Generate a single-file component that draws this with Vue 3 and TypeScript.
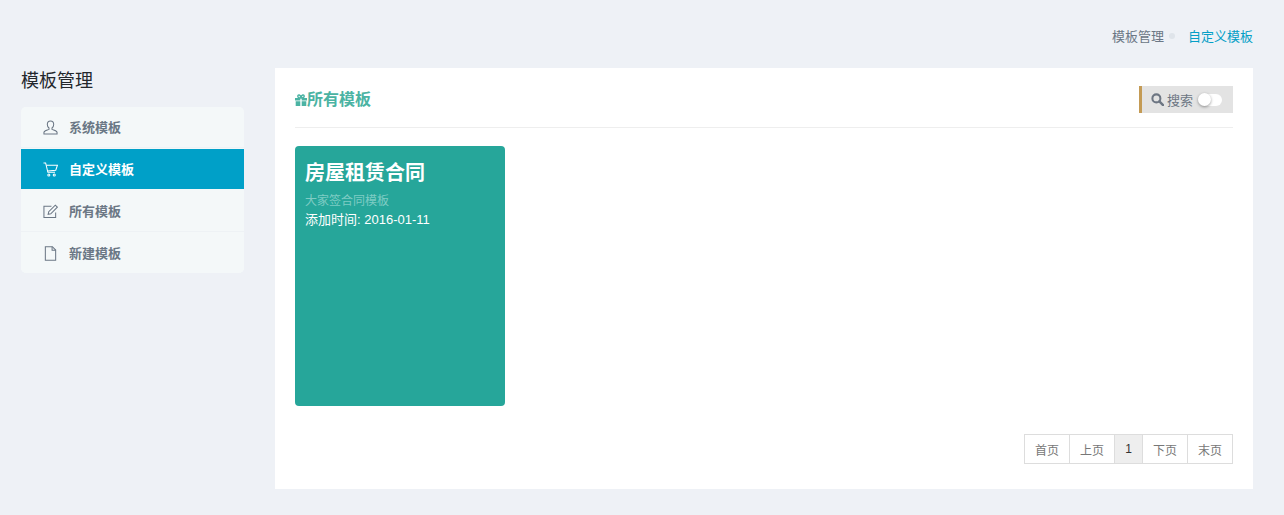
<script setup lang="ts">
const items = [
  { label: '系统模板', icon: 'user', active: false },
  { label: '自定义模板', icon: 'cart', active: true },
  { label: '所有模板', icon: 'edit', active: false },
  { label: '新建模板', icon: 'file', active: false },
]
const pages = [
  { label: '首页', current: false },
  { label: '上页', current: false },
  { label: '1', current: true },
  { label: '下页', current: false },
  { label: '末页', current: false },
]
</script>

<template>
  <div class="page">
    <div class="crumbs">
      <span class="crumb">模板管理</span>
      <i class="dot"></i>
      <span class="crumb current">自定义模板</span>
    </div>
    <div class="main">
      <aside class="side">
        <h2 class="side-title">模板管理</h2>
        <ul class="menu">
          <li v-for="item in items" :key="item.label" class="menu-item" :class="{ active: item.active }">
            <svg class="menu-icon" viewBox="0 0 16 16" fill="none" stroke="currentColor" stroke-width="1.1">
              <template v-if="item.icon === 'user'">
                <path d="M8 1c-2.100 0-3.400 1.500-3.400 3.700 0 1.500.7 3 1.800 3.800v1.500c-1.500.8-5.200 1.100-5.400 3.200V15h14v-1.800c-.2-2.100-3.900-2.400-5.400-3.200V8.500c1.100-.8 1.800-2.300 1.800-3.800C11.400 2.500 10.100 1 8 1z" />
              </template>
              <template v-else-if="item.icon === 'cart'">
                <path d="M.5 1h2.300l2.400 10h7.600" />
                <path d="M3.400 3.500h12l-1.800 5.200L4.600 9.500" />
                <circle cx="6.200" cy="13.800" r="1.100" />
                <circle cx="12" cy="13.800" r="1.100" />
              </template>
              <template v-else-if="item.icon === 'edit'">
                <path d="M13.500 9v5.500H1V2.500h8" />
                <path d="M5.500 11l.6-2.800 7-7 2.200 2.200-7 7z" />
              </template>
              <template v-else>
                <path d="M2.500 .8h7.500l3.500 3.500v10.900h-11z" />
                <path d="M9.700 .8v3.800h3.800" />
              </template>
            </svg>
            <span>{{ item.label }}</span>
          </li>
        </ul>
      </aside>
      <section class="panel">
        <header class="panel-head">
          <h3 class="panel-title">
            <svg class="gift" viewBox="0 0 12 12" fill="currentColor">
              <path d="M0 4h5.300v2.600H0zM6.700 4H12v2.600H6.700zM.7 7.200h4.600V12H.7zM6.700 7.200h4.600V12H6.700z" />
              <path d="M5.800 4C4.500 4 2.800 3.600 2.800 2.300 2.800 1.200 3.700 .8 4.300 1c.9.300 1.500 1.500 1.700 2.500.2-1 .8-2.200 1.700-2.500.6-.2 1.500.2 1.500 1.300C9.200 3.600 7.500 4 6.200 4z" fill="none" stroke="currentColor" stroke-width="1.400" />
            </svg>所有模板
          </h3>
          <div class="search">
            <svg class="search-icon" viewBox="0 0 14 14" fill="none" stroke="currentColor">
              <circle cx="5.800" cy="5.800" r="4.300" stroke-width="2.200" />
              <path d="M9 9l4 4" stroke-width="2.600" stroke-linecap="round" />
            </svg>
            <span>搜索</span>
            <span class="toggle"><i class="knob"></i></span>
          </div>
        </header>
        <div class="cards">
          <article class="card">
            <h4 class="card-title">房屋租赁合同</h4>
            <p class="card-sub">大家签合同模板</p>
            <p class="card-date">添加时间: 2016-01-11</p>
          </article>
        </div>
        <nav class="pager">
          <a v-for="p in pages" :key="p.label" class="page-btn" :class="{ current: p.current }">{{ p.label }}</a>
        </nav>
      </section>
    </div>
  </div>
</template>

<style>
html, body { margin: 0; background: #eef1f6; }
</style>

<style scoped>
.page {
  box-sizing: border-box;
  height: 515px;
  overflow: hidden;
  padding: 0 31px 0 21px;
  background: #eef1f6;
  font-family: "Liberation Sans", "Noto Sans CJK SC", sans-serif;
  font-size: 13px;
}
.crumbs {
  height: 68px;
  box-sizing: border-box;
  padding-top: 28px;
  display: flex;
  justify-content: flex-end;
  align-items: flex-start;
  line-height: 18px;
  color: #6b7785;
}
.dot {
  width: 6px;
  height: 6px;
  margin: 5px 13px 0 5px;
  border-radius: 50%;
  background: #dfe4ea;
}
.crumb.current { color: #049fc6; }
.main { display: flex; align-items: flex-start; }
.side { width: 223px; margin-right: 31px; }
.side-title {
  margin: 0;
  height: 39px;
  padding-top: 1px;
  box-sizing: border-box;
  font-size: 18px;
  font-weight: 400;
  line-height: 24px;
  color: #23272c;
}
.menu {
  list-style: none;
  margin: 0;
  padding: 0;
  background: #f4f8f9;
  border-radius: 5px;
  overflow: hidden;
}
.menu-item {
  height: 40px;
  margin-bottom: 2px;
  padding-left: 21px;
  padding-bottom: 2px;
  box-sizing: border-box;
  display: flex;
  align-items: center;
  background: #f4f8f9;
  color: #6b7785;
  font-weight: 700;
  box-shadow: 0 1px 0 #eef2f5;
}
.menu-item:last-child { margin-bottom: 0; box-shadow: none; }
.menu-item.active { background: #00a0c8; color: #fff; box-shadow: none; }
.menu-icon { width: 15px; height: 15px; margin: 2px 11px 0 1px; flex: none; }
.panel {
  flex: 1;
  height: 421px;
  box-sizing: border-box;
  padding: 18px 20px 0;
  background: #fff;
}
.panel-head {
  height: 42px;
  box-sizing: border-box;
  display: flex;
  justify-content: space-between;
  align-items: flex-start;
  border-bottom: 1px solid #eeeeee;
}
.panel-title {
  margin: 0;
  display: flex;
  align-items: center;
  height: 27px;
  font-size: 16px;
  font-weight: 700;
  line-height: 24px;
  color: #4bb3a3;
}
.gift { width: 12px; height: 12px; }
.search {
  width: 94px;
  height: 27px;
  box-sizing: border-box;
  padding-left: 9px;
  display: flex;
  align-items: center;
  border-left: 3px solid #c49b55;
  background: #e3e3e3;
  color: #6d7683;
}
.search-icon { width: 13px; height: 13px; margin-right: 3px; }
.toggle {
  position: relative;
  width: 24px;
  height: 12px;
  margin-left: 5px;
  border-radius: 6px;
  background: #fff;
}
.knob {
  position: absolute;
  left: 0;
  top: -1px;
  width: 13px;
  height: 13px;
  border-radius: 50%;
  background: #fff;
  box-shadow: 0 1px 3px rgba(0, 0, 0, 0.4);
}
.cards { padding-top: 18px; }
.card {
  width: 210px;
  height: 260px;
  box-sizing: border-box;
  padding: 11px 10px 10px;
  border-radius: 4px;
  background: #26a69a;
  color: #fff;
}
.card-title {
  margin: 0;
  font-size: 20px;
  font-weight: 700;
  line-height: 32px;
}
.card-sub {
  margin: 3px 0 0;
  font-size: 12px;
  line-height: 18px;
  color: #7fccc4;
}
.card-date {
  margin: 0;
  font-size: 13px;
  line-height: 20px;
}
.pager { display: flex; justify-content: flex-end; margin-top: 28px; }
.page-btn {
  width: 46px;
  height: 30px;
  box-sizing: border-box;
  margin-left: -1px;
  display: flex;
  align-items: center;
  justify-content: center;
  border: 1px solid #dddddd;
  background: #fff;
  color: #777777;
  font-size: 12px;
}
.page-btn.current { width: 29px; background: #eeeeee; color: #333333; }
</style>
